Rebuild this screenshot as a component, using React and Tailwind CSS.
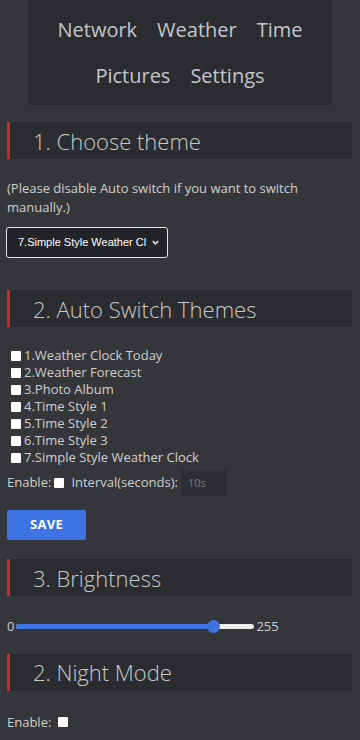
import { useState } from "react";

const themes = [
  "1.Weather Clock Today",
  "2.Weather Forecast",
  "3.Photo Album",
  "4.Time Style 1",
  "5.Time Style 2",
  "6.Time Style 3",
  "7.Simple Style Weather Clock",
];

function Header({ title }) {
  return (
    <div className="flex h-[37px] ml-[7px] mr-[8px] border-l-[3px] border-[#c0302a] bg-[#2b2c30] items-center">
      <p className="pl-[23px] text-[22px] font-light text-[#c9c9c9] leading-none">{title}</p>
    </div>
  );
}

function Box({ className = "" }) {
  return <span className={"inline-block w-[10px] h-[10px] bg-white rounded-[1px] " + className}></span>;
}

export default function App() {
  const [bright] = useState(211);
  const pos = (bright / 255) * 238;
  return (
    <main
      className="min-h-[740px] bg-[#34363a] text-[#d2d2d2] pb-4"
      style={{ fontFamily: '"Open Sans", "Noto Sans", sans-serif' }}
    >
      <nav className="mx-[28px] w-[304px] h-[105px] bg-[#2b2c30] flex flex-col items-center justify-center gap-[26px] text-[20px] text-[#c4c6cc]">
        <div className="flex gap-[20px] leading-none">
          <span>Network</span>
          <span>Weather</span>
          <span>Time</span>
        </div>
        <div className="flex gap-[20px] leading-none">
          <span>Pictures</span>
          <span>Settings</span>
        </div>
      </nav>

      <div className="mt-[17px]">
        <Header title="1. Choose theme" />
      </div>
      <p className="px-[7px] mt-[20px] text-[13px] leading-[19px] text-[#cfcfcf]">
        (Please disable Auto switch if you want to switch manually.)
      </p>
      <div className="mt-[10px] ml-[6px] w-[162px] h-[31px] border border-[#e6e6e6] rounded-[3px] bg-[#232427] flex items-center justify-between pl-[11px] pr-[7px]">
        <span
          className="text-[11px] text-white whitespace-nowrap overflow-hidden w-[128px]"
          style={{ fontFamily: '"Liberation Sans", Arial, sans-serif' }}
        >
          7.Simple Style Weather Clock
        </span>
        <svg width="9" height="9" viewBox="0 0 10 10" fill="none" stroke="#ddd" strokeWidth="1.8">
          <path d="M2 3.5 L5 6.5 L8 3.5" />
        </svg>
      </div>

      <div className="mt-[32px]">
        <Header title="2. Auto Switch Themes" />
      </div>
      <div className="mt-[20px] flex flex-col">
        {themes.map((t) => (
          <div key={t} className="flex items-center h-[17px] pl-[11px] gap-[3px] text-[13px] text-[#d0d0d0]">
            <Box />
            <span>{t}</span>
          </div>
        ))}
      </div>
      <div className="flex items-center mt-[4px] pl-[7px] text-[13px] text-[#d0d0d0]">
        <span>Enable:</span>
        <Box className="ml-[3px]" />
        <span className="ml-[7px]">Interval(seconds):</span>
        <div className="ml-[3px] w-[46px] h-[26px] bg-[#2d2e32] flex items-center pl-[7px] text-[11px] text-[#77797e]">
          10s
        </div>
      </div>
      <button className="mt-[14px] ml-[7px] w-[79px] h-[30px] rounded-[2px] bg-[#3d73e3] text-white text-[13px] font-bold tracking-wide">
        SAVE
      </button>

      <div className="mt-[19px]">
        <Header title="3. Brightness" />
      </div>
      <div className="flex items-center mt-[21px] pl-[7px] text-[13px] text-[#d0d0d0]">
        <span>0</span>
        <div className="relative ml-[2px] w-[238px] h-[14px] flex items-center">
          <div className="w-full h-[5px] rounded-full bg-[#eeeeee]"></div>
          <div className="absolute left-0 h-[5px] rounded-full bg-[#3d73e3]" style={{ width: `${pos}px` }}></div>
          <div
            className="absolute w-[13px] h-[13px] rounded-full bg-[#3d73e3]"
            style={{ left: `${pos - 6.5}px` }}
          ></div>
        </div>
        <span className="ml-[2px]">255</span>
      </div>

      <div className="mt-[17px]">
        <Header title="2. Night Mode" />
      </div>
      <div className="flex items-center mt-[22px] pl-[7px] text-[13px] text-[#d0d0d0]">
        <span>Enable:</span>
        <Box className="ml-[7px]" />
      </div>
    </main>
  );
}
